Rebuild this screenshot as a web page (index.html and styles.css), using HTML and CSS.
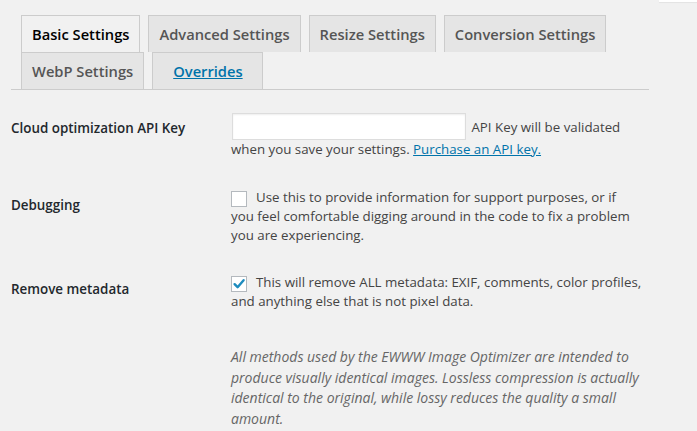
FILE: index.html
```html
<!DOCTYPE html>
<html>
<head>
<meta charset="utf-8">
<link rel="stylesheet" href="styles.css">
</head>
<body>
<div class="screen-meta"></div>
<div class="wrap">
  <nav class="tabs">
    <span class="tab active">Basic Settings</span>
    <span class="tab">Advanced Settings</span>
    <span class="tab">Resize Settings</span>
    <span class="tab">Conversion Settings</span>
    <span class="tab">WebP Settings</span>
    <span class="tab tab-link"><a href="#">Overrides</a></span>
  </nav>
  <div class="form">
    <div class="row row-api">
      <div class="label">Cloud optimization API Key</div>
      <div class="field">
        <input class="text-input" type="text"> API Key will be validated when you save your settings. <a href="#">Purchase an API key.</a>
      </div>
    </div>
    <div class="row row-debug">
      <div class="label">Debugging</div>
      <div class="field">
        <span class="checkbox"></span>Use this to provide information for support purposes, or if you feel comfortable digging around in the code to fix a problem you are experiencing.
      </div>
    </div>
    <div class="row row-meta">
      <div class="label">Remove metadata</div>
      <div class="field">
        <span class="checkbox checked"><svg viewBox="0 0 16 16" width="16" height="16"><path d="M3.6 8.2 L6.6 11.2 L12.6 4.2" fill="none" stroke="#1e8cbe" stroke-width="2.4" stroke-linecap="round" stroke-linejoin="round"/></svg></span>This will remove ALL metadata: EXIF, comments, color profiles, and anything else that is not pixel data.
      </div>
    </div>
    <div class="row row-note">
      <div class="label"></div>
      <div class="field note">All methods used by the EWWW Image Optimizer are intended to produce visually identical images. Lossless compression is actually identical to the original, while lossy reduces the quality a small amount.</div>
    </div>
  </div>
</div>
</body>
</html>
```

FILE: styles.css
```css
html, body {
  margin: 0;
  padding: 0;
  background: #f1f1f1;
  font-family: "Open Sans", "Noto Sans", sans-serif;
  color: #444;
  overflow: hidden;
}
.screen-meta {
  position: absolute;
  top: 0;
  left: 659px;
  width: 40px;
  height: 2px;
  background: #fff;
  box-shadow: 0 1px 1px rgba(0,0,0,0.06);
}
.wrap {
  padding-left: 11px;
}
.tabs {
  width: 638px;
  padding-top: 15px;
  border-bottom: 1px solid #ccc;
  display: flex;
  flex-wrap: wrap;
}
.tab {
  display: block;
  margin-left: 10px;
  padding: 5px 10px;
  height: 26px;
  line-height: 26px;
  border: 1px solid #ccc;
  border-bottom: none;
  background: #e5e5e5;
  color: #555;
  font-size: 14.7px;
  font-weight: 600;
  margin-right: -1px;
}
.tab + .tab { margin-left: 9px; }
.tab:nth-child(5) { margin-left: 10px; }
.tab.active {
  background: #f1f1f1;
  color: #000;
}
.tab-link {
  padding: 5px 19px 5px 20px;
}
.tab-link a {
  color: #0073aa;
  text-decoration: underline;
}
.form {
  font-size: 13.3px;
}
.row {
  display: grid;
  grid-template-columns: 220px 407px;
}
.row-meta { grid-template-columns: 220px 430px; }
.row-note { grid-template-columns: 220px 420px; }
.label {
  font-size: 13.4px;
  font-weight: 600;
  color: #23282d;
}
.field {
  color: #444;
  line-height: 19px;
}
.field a {
  color: #0073aa;
}
.row-api { margin-top: 23px; }
.row-api .label { padding-top: 6px; }
.text-input {
  box-sizing: border-box;
  width: 234px;
  height: 27px;
  margin: 0 2px 0 1px;
  vertical-align: baseline;
  border: 1px solid #ddd;
  box-shadow: inset 0 1px 2px rgba(0,0,0,0.07);
  background: #fff;
  padding: 0;
  font-size: 13px;
  font-family: "Open Sans", sans-serif;
}
.row-debug { margin-top: 29px; }
.row-debug .label { padding-top: 8px; }
.checkbox {
  display: inline-block;
  box-sizing: border-box;
  width: 16px;
  height: 16px;
  border: 1px solid #b4b9be;
  background: #fff;
  vertical-align: -4.5px;
  margin-right: 9px;
  position: relative;
}
.checkbox svg {
  position: absolute;
  left: -1px;
  top: -1px;
}
.row-meta { margin-top: 28px; }
.row-meta .label { padding-top: 7px; }
.row-note { margin-top: 36px; }
.note {
  font-style: italic;
  font-size: 14px;
  color: #666;
  line-height: 20.7px;
}
```
